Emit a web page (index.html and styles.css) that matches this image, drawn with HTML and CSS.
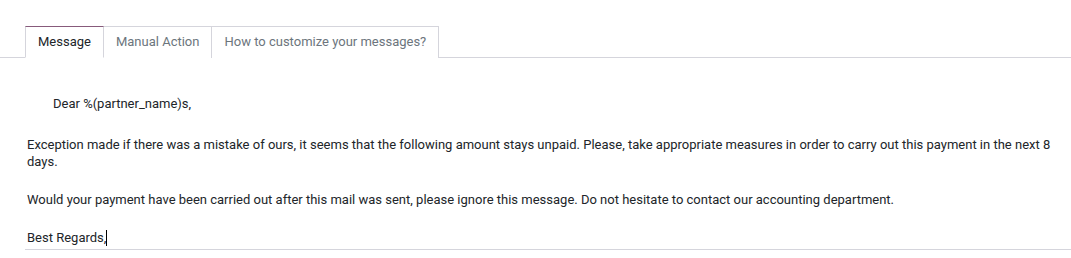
FILE: index.html
```html
<!DOCTYPE html>
<html lang="en">
<head>
  <meta charset="UTF-8" />
  <title>Follow-up message</title>
  <link rel="stylesheet" href="styles.css">
</head>
<body>

  <!-- Tabs -->
  <ul class="tabs">
    <li class="tab active">Message</li>
    <li class="tab">Manual Action</li>
    <li class="tab">How to customize your messages?</li>
  </ul>

  <!-- Message editor -->
  <div class="editor">
    <p class="greeting">Dear %(partner_name)s,</p>
    <p>Exception made if there was a mistake of ours, it seems that the following amount stays unpaid. Please, take appropriate measures in order to carry out this payment in the next 8 days.</p>
    <p>Would your payment have been carried out after this mail was sent, please ignore this message. Do not hesitate to contact our accounting department.</p>
    <p>Best Regards,<span class="caret"></span></p>
  </div>

</body>
</html>
```

FILE: styles.css
```css
* {
  box-sizing: border-box;
}

body {
  margin: 0;
  padding: 26px 0 0 0;
  font-family: Roboto, 'Noto Sans', sans-serif;
  font-size: 13px;
  color: #212529;
  background: #ffffff;
}

.tabs {
  display: flex;
  list-style: none;
  margin: 0;
  padding: 0 0 0 25px;
  border-bottom: 1px solid #d5d5dc;
}

.tab {
  padding: 6px 12px;
  line-height: 18px;
  margin-bottom: -1px;
  color: #6c757d;
  border: 1px solid #d5d5dc;
  border-left: none;
  border-bottom: none;
  background: #ffffff;
}

.tab.active {
  color: #212529;
  border-left: 1px solid #d5d5dc;
  border-top-color: #875a7b;
  border-bottom: 1px solid #ffffff;
}

.editor {
  margin: 0 0 0 25px;
  padding: 37px 2px 2px 2px;
  border-bottom: 1px solid #d5d5dc;
  line-height: 17px;
}

.editor p {
  margin: 0 0 21px 0;
}

.editor .greeting {
  padding-left: 26px;
  margin-bottom: 24px;
}

.editor p:last-child {
  margin-bottom: 1px;
}

.caret {
  display: inline-block;
  width: 1px;
  height: 16px;
  vertical-align: -4px;
  background: #000000;
}
```
